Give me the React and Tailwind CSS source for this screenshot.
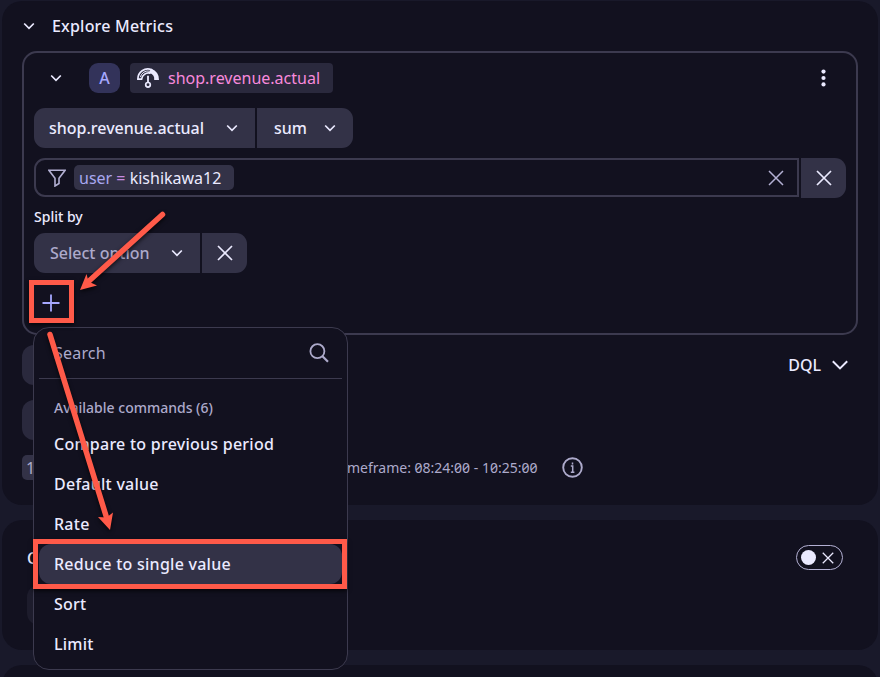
import React from 'react';

function Chevron({ className = '', size = 12, width = 1.7 }) {
  return (
    <svg className={className} width={size} height={size} viewBox="0 0 12 12" fill="none" stroke="currentColor" strokeWidth={width}>
      <path d="M1.2 3.5 6 8.3l4.8-4.8" />
    </svg>
  );
}

function Cross({ size = 16, width = 1.7 }) {
  return (
    <svg width={size} height={size} viewBox="0 0 16 16" fill="none" stroke="currentColor" strokeWidth={width}>
      <path d="M1 1l14 14M15 1 1 15" />
    </svg>
  );
}

function Gauge() {
  return (
    <svg width="24" height="22" viewBox="0 0 24 22" fill="none" stroke="currentColor">
      <path d="M1.9 12.1A10 10 0 0 1 15.5 2.6L13.8 6.1A7 7 0 0 0 5.6 12.1Z" strokeWidth="1.7" />
      <path d="M4.3 10.2A8 8 0 0 1 14 4.2" strokeWidth="1" />
      <path d="M15.4 1.8A11 11 0 0 1 23 12.9h-4.8a6.4 6.4 0 0 0-4.7-6.8Z" fill="currentColor" stroke="none" />
      <path d="M12 8.8v7" strokeWidth="1.8" />
      <circle cx="12" cy="17.8" r="2.3" strokeWidth="1.7" />
    </svg>
  );
}

const before = ['Compare to previous period', 'Default value', 'Rate'];
const after = ['Sort', 'Limit'];

function Item({ children, spacing = 'tracking-[0.25px]' }) {
  return <div className={`flex h-10 items-center pl-[15px] ${spacing}`}>{children}</div>;
}

function CommandMenu() {
  return (
    <div className="absolute left-[33px] top-[327px] h-[343px] w-[315px] rounded-2xl border border-[#3c3a4e] bg-[#12111f] px-[5px] font-medium text-[#ebeaff]">
      <div className="flex h-[51px] items-center justify-between border-b border-[#3c3a4e] pl-[15px] pr-[13px] text-[#adaacb]">
        <span className="font-normal tracking-[0.2px]">Search</span>
        <svg width="20" height="20" viewBox="0 0 20 20" fill="none" stroke="currentColor" strokeWidth="1.8">
          <circle cx="8.4" cy="8.2" r="7" />
          <path d="M13.5 13.3 19 18.8" strokeWidth="2.2" />
        </svg>
      </div>
      <div className="flex h-[45px] items-end pb-1.5 pl-[15px] text-sm leading-[20px] text-[#adaacb]">Available commands (6)</div>
      {before.map((c) => <Item key={c}>{c}</Item>)}
      <div className="rounded-xl bg-[#333247]"><Item>Reduce to single value</Item></div>
      {after.map((c) => <Item key={c}>{c}</Item>)}
    </div>
  );
}

function Annotations() {
  return (
    <>
      <div className="absolute left-[29px] top-[280px] h-[43px] w-[45px] border-[5px] border-[#ff5a49] shadow-[0_2px_4px_rgba(0,0,0,0.7)]" />
      <div className="absolute left-[33px] top-[539px] h-[50px] w-[314px] border-[5px] border-[#ff5a49] shadow-[0_2px_4px_rgba(0,0,0,0.7)]" />
      <svg className="absolute left-0 top-0 drop-shadow-[0_2px_2px_rgba(0,0,0,0.7)]" width="880" height="677" fill="#ff5a49" stroke="#ff5a49">
        <path d="M162.500 214.500 89 281" strokeWidth="5.500" strokeLinecap="round" />
        <path d="M80 290 86.500 274 88.500 281.500 97 285.500Z" stroke="none" />
        <path d="M50 334.500 107 519" strokeWidth="5.500" strokeLinecap="round" />
        <path d="M110 530 98 517 106.500 517.500 113 512.500Z" stroke="none" />
      </svg>
    </>
  );
}

export default function App() {
  return (
    <div className="relative h-[677px] w-[880px] overflow-hidden bg-[#19192a] px-0.5 pt-px font-['Noto_Sans','Open_Sans',sans-serif] text-base leading-6 text-[#ebeaff]">
      <div className="flex flex-col gap-[15px]">
        <section className="h-[504px] rounded-[20px] bg-[#12111f] px-5">
          <div className="flex h-[50px] items-center gap-[17px] pl-[1px] font-medium">
            <Chevron />
            <h2 className="tracking-[0.2px]">Explore Metrics</h2>
          </div>

          <div className="h-[284px] w-[836px] rounded-[15px] border-2 border-[#3c3a4f] pl-2.5 pr-2.5 pt-2.5">
            <div className="flex h-[30px] items-center pl-4">
              <Chevron />
              <span className="ml-[27px] flex h-[30px] w-[31px] items-center justify-center rounded-[9px] bg-[#33335a] font-medium text-[#a6a8ff]">A</span>
              <span className="ml-2.5 flex h-[30px] w-[203px] items-center gap-2 rounded bg-[#2a293d] pl-1.5 text-[#f889dc]">
                <span className="text-[#ebeaff]"><Gauge /></span>
                <span>shop.revenue.actual</span>
              </span>
              <svg className="ml-auto mr-[20px]" width="5" height="18" viewBox="0 0 5 18" fill="currentColor">
                <circle cx="2.500" cy="2.600" r="2.100" />
                <circle cx="2.500" cy="9" r="2.100" />
                <circle cx="2.500" cy="15.400" r="2.100" />
              </svg>
            </div>

            <div className="mt-[15px] flex h-10 gap-0.5 font-medium">
              <div className="flex w-[221px] items-center justify-between rounded-l-[11px] bg-[#333247] pl-[15px] pr-[17px]">
                <span>shop.revenue.actual</span>
                <Chevron />
              </div>
              <div className="flex w-24 items-center justify-between rounded-r-[11px] bg-[#333247] px-[17px]">
                <span>sum</span>
                <Chevron />
              </div>
            </div>

            <div className="mt-2.5 flex h-10 gap-0.5">
              <div className="flex h-[39px] w-[765px] items-center rounded-l-[11px] border-2 border-[#3c3a4f] pl-3 pr-[13px] text-[#b3b0d3]">
                <svg width="18" height="18" viewBox="0 0 18 18" fill="none" stroke="currentColor" strokeWidth="1.600">
                  <path d="M.9 1.300h16.200l-6.100 8v5.200l-4 2.500V9.300Z" />
                </svg>
                <span className="ml-2 flex h-[25px] w-40 items-center rounded-[5px] bg-[#333247] pl-[5px]">
                  <span className="whitespace-pre text-[#a9a8f0]">user </span>
                  <span className="whitespace-pre text-[#c68be0]">= </span>
                  <span className="text-[#ebeaff]">kishikawa12</span>
                </span>
                <span className="ml-auto"><Cross width={1.500} /></span>
              </div>
              <button className="flex w-[45px] items-center justify-center rounded-r-[11px] bg-[#333247]"><Cross /></button>
            </div>

            <div className="mt-2 h-5 text-sm leading-[21px] font-medium">Split by</div>

            <div className="mt-[7px] flex h-10 gap-0.5">
              <div className="flex w-[166px] items-center justify-between rounded-l-[11px] bg-[#333247] pl-4 pr-[17px] font-medium">
                <span className="text-[#adaacb]">Select option</span>
                <Chevron />
              </div>
              <button className="flex w-[45px] items-center justify-center rounded-r-[11px] bg-[#333247]"><Cross /></button>
            </div>

            <svg className="ml-2 mt-[21px] text-[#a6a8ff]" width="18" height="18" viewBox="0 0 18 18" stroke="currentColor" strokeWidth="1.800">
              <path d="M9 .5v17M.5 9h17" />
            </svg>
          </div>

          <div className="mt-2.5 flex h-10 items-center justify-between">
            <div className="h-10 w-24 rounded-xl bg-[#2a293d]" />
            <div className="mr-[9px] flex items-center gap-2.5 font-medium">
              <span>DQL</span>
              <Chevron size={18} width={1.300} />
            </div>
          </div>
          <div className="mt-[15px] h-10 w-24 rounded-xl bg-[#2a293d]" />
          <div className="mt-[15px] flex h-[25px] items-center text-sm text-[#adaacb]">
            <span className="flex h-[25px] w-10 items-center rounded-[5px] bg-[#333247] pl-1 text-base">1</span>
            <span className="ml-[285px] w-[203px] whitespace-nowrap [font-feature-settings:'zero']">meframe: 08:24:00 - 10:25:00</span>
            <svg className="ml-[12px]" width="21" height="21" viewBox="0 0 21 21" fill="none" stroke="currentColor" strokeWidth="1.900">
              <circle cx="10.500" cy="10.500" r="9.300" />
              <path d="M8.800 9h1.900v6.200M8.800 15.200h3.600M10.500 5.400v2" strokeWidth="1.500" />
            </svg>
          </div>
        </section>

        <section className="h-[130px] rounded-[20px] bg-[#12111f] pl-[25px] pr-[35px] pt-[25px]">
          <div className="flex h-[25px] items-center justify-between">
            <span className="font-medium">C</span>
            <div className="flex h-[25px] w-[47px] items-center justify-between rounded-full border-[1.500px] border-[#b3b0d3] pl-1 pr-2">
              <span className="h-[15px] w-[15px] rounded-full bg-[#ebeaff]" />
              <Cross size={12} />
            </div>
          </div>
          <div className="mt-[15px] h-10 w-24 rounded-xl bg-[#1d1c2c]" />
        </section>

        <section className="h-10 rounded-[20px] bg-[#12111f]" />
      </div>

      <CommandMenu />
      <Annotations />
    </div>
  );
}
